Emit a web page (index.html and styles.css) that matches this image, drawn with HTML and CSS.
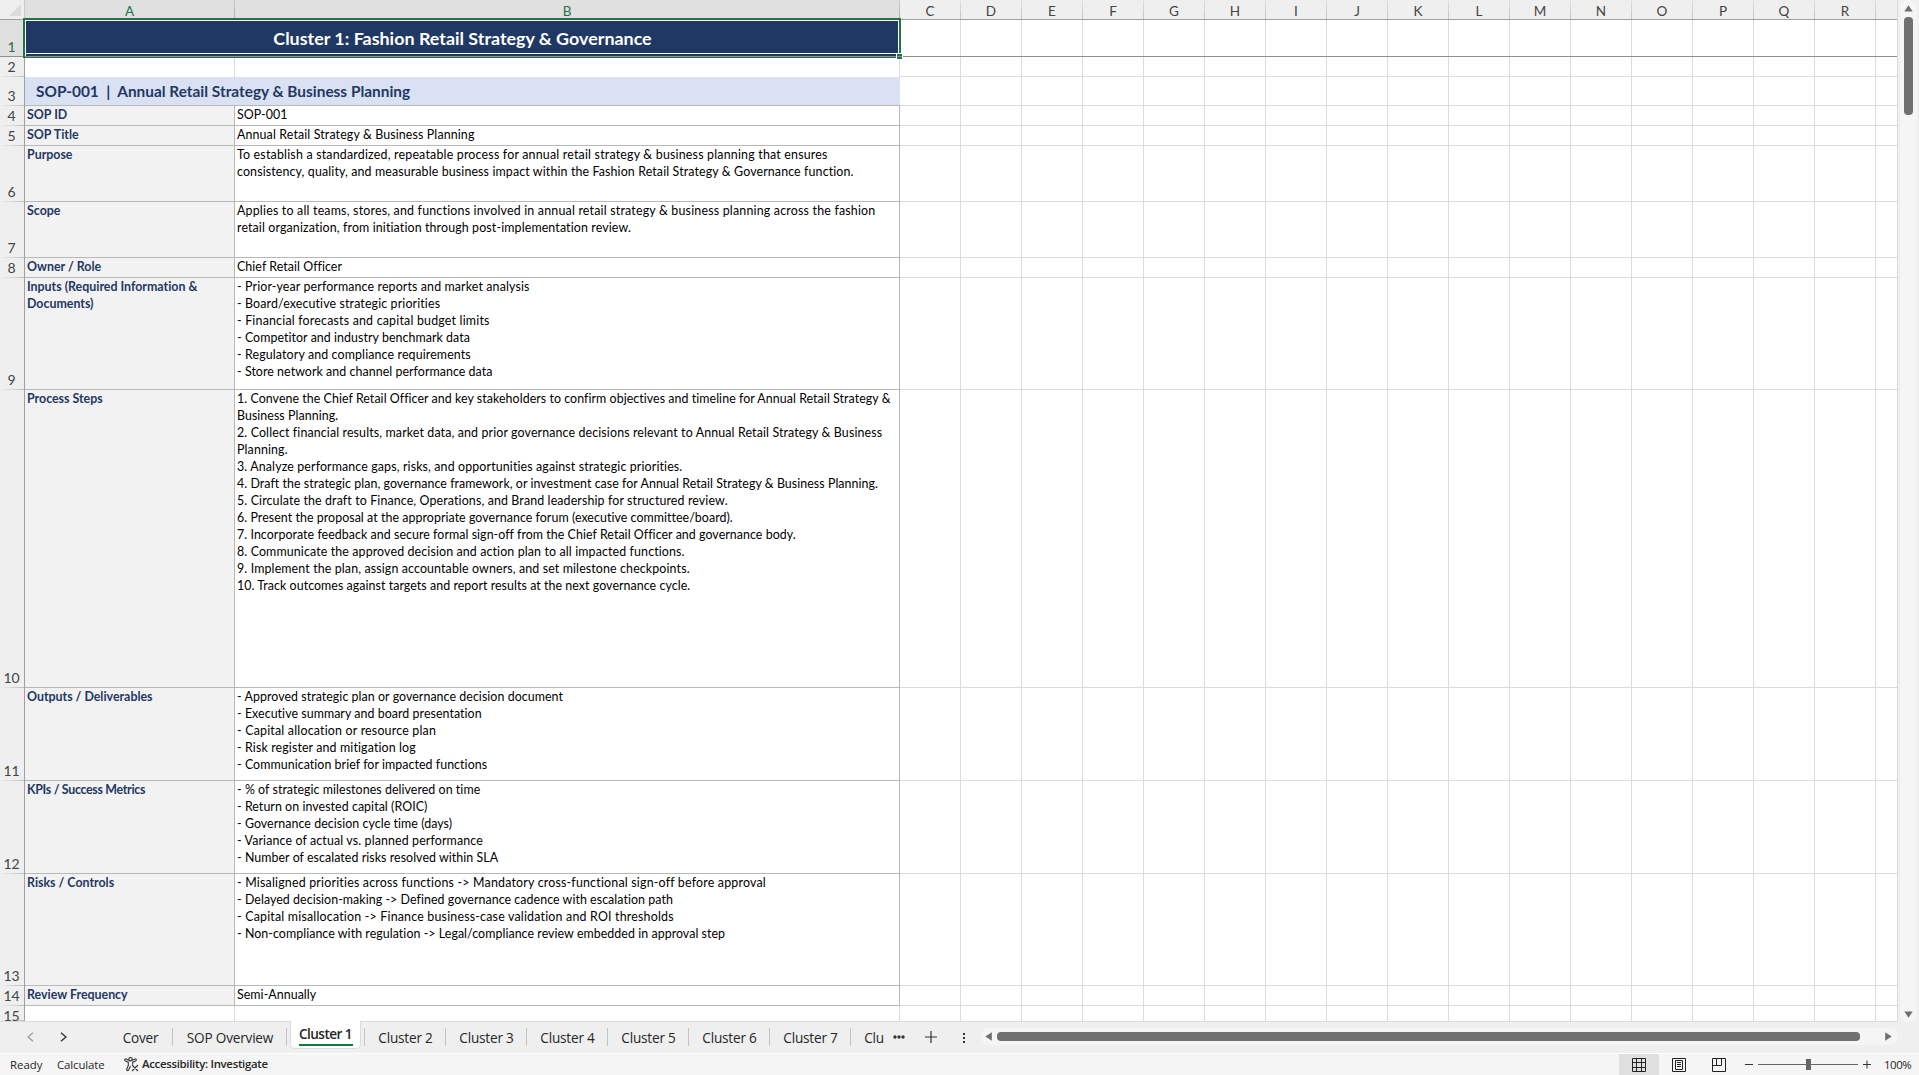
FILE: index.html
```html
<!DOCTYPE html>
<html lang="en">
<head>
    <meta charset="utf-8">
    <title>Fashion Retail SOPs</title>
    <link rel="stylesheet" href="styles.css">
</head>
<body>
<div id="app">
    <div id="main">
        <div id="sheet">
            <div class="col-heads">
                <div class="corner"><svg width="24" height="19"><path d="M21 4v12H9z" fill="#dcdcdc"/></svg></div>
                <div class="ch a sel">A</div>
                <div class="ch b sel">B</div>
                <div class="ch">C</div><div class="ch">D</div><div class="ch">E</div><div class="ch">F</div>
                <div class="ch">G</div><div class="ch">H</div><div class="ch">I</div><div class="ch">J</div>
                <div class="ch">K</div><div class="ch">L</div><div class="ch">M</div><div class="ch">N</div>
                <div class="ch">O</div><div class="ch">P</div><div class="ch">Q</div><div class="ch">R</div>
            </div>
            <div class="row r1">
                <div class="rh sel">1</div>
                <div class="title">Cluster 1: Fashion Retail Strategy &amp; Governance</div>
                <div class="rest"></div>
                <div class="selection"><i class="handle"></i></div>
            </div>
            <div class="row empty">
                <div class="rh">2</div><div class="label"></div><div class="val"></div><div class="rest"></div>
            </div>
            <div class="row r3">
                <div class="rh">3</div>
                <div class="section">SOP-001  |  Annual Retail Strategy &amp; Business Planning</div>
                <div class="rest"></div>
            </div>
            <div class="row">
                <div class="rh">4</div><div class="label">SOP ID</div><div class="val">SOP-001</div><div class="rest"></div>
            </div>
            <div class="row">
                <div class="rh">5</div><div class="label">SOP Title</div>
                <div class="val"><span class="w2">Annual Retail Strategy &amp; Business Planning</span></div><div class="rest"></div>
            </div>
            <div class="row h56">
                <div class="rh">6</div><div class="label">Purpose</div>
                <div class="val"><span class="w3">To establish a standardized, repeatable process for annual retail strategy &amp; business planning that ensures</span>
<span class="w2">consistency, quality, and measurable business impact within the Fashion Retail Strategy &amp; Governance function.</span></div>
                <div class="rest"></div>
            </div>
            <div class="row h56">
                <div class="rh">7</div><div class="label">Scope</div>
                <div class="val"><span class="w3">Applies to all teams, stores, and functions involved in annual retail strategy &amp; business planning across the fashion</span>
<span class="w2">retail organization, from initiation through post-implementation review.</span></div>
                <div class="rest"></div>
            </div>
            <div class="row">
                <div class="rh">8</div><div class="label">Owner / Role</div><div class="val">Chief Retail Officer</div><div class="rest"></div>
            </div>
            <div class="row h112">
                <div class="rh">9</div><div class="label">Inputs (Required Information &amp;
Documents)</div>
                <div class="val"><span class="w2">- Prior-year performance reports and market analysis
- Board/executive strategic priorities</span>
<span class="w3">- Financial forecasts and capital budget limits</span>
- Competitor and industry benchmark data
<span class="w2">- Regulatory and compliance requirements</span>
- Store network and channel performance data</div>
                <div class="rest"></div>
            </div>
            <div class="row h298">
                <div class="rh">10</div><div class="label">Process Steps</div>
                <div class="val">1. Convene the Chief Retail Officer and key stakeholders to confirm objectives and timeline for Annual Retail Strategy &amp;
Business Planning.
<span class="w2">2. Collect financial results, market data, and prior governance decisions relevant to Annual Retail Strategy &amp; Business
Planning.
3. Analyze performance gaps, risks, and opportunities against strategic priorities.</span>
4. Draft the strategic plan, governance framework, or investment case for Annual Retail Strategy &amp; Business Planning.
<span class="w2">5. Circulate the draft to Finance, Operations, and Brand leadership for structured review.</span>
6. Present the proposal at the appropriate governance forum (executive committee/board).
7. Incorporate feedback and secure formal sign-off from the Chief Retail Officer and governance body.
<span class="w2">8. Communicate the approved decision and action plan to all impacted functions.
9. Implement the plan, assign accountable owners, and set milestone checkpoints.</span>
10. Track outcomes against targets and report results at the next governance cycle.</div>
                <div class="rest"></div>
            </div>
            <div class="row h93">
                <div class="rh">11</div><div class="label">Outputs / Deliverables</div>
                <div class="val">- Approved strategic plan or governance decision document
- Executive summary and board presentation
<span class="w3">- Capital allocation or resource plan</span>
<span class="w2">- Risk register and mitigation log</span>
- Communication brief for impacted functions</div>
                <div class="rest"></div>
            </div>
            <div class="row h93">
                <div class="rh">12</div><div class="label tight">KPIs / Success Metrics</div>
                <div class="val">- % of strategic milestones delivered on time
- Return on invested capital (ROIC)
- Governance decision cycle time (days)
<span class="w2">- Variance of actual vs. planned performance</span>
- Number of escalated risks resolved within SLA</div>
                <div class="rest"></div>
            </div>
            <div class="row h112">
                <div class="rh">13</div><div class="label">Risks / Controls</div>
                <div class="val"><span class="w3">- Misaligned priorities across functions -&gt; Mandatory cross-functional sign-off before approval</span>
- Delayed decision-making -&gt; Defined governance cadence with escalation path
<span class="w3">- Capital misallocation -&gt; Finance business-case validation and ROI thresholds</span>
- Non-compliance with regulation -&gt; Legal/compliance review embedded in approval step</div>
                <div class="rest"></div>
            </div>
            <div class="row">
                <div class="rh">14</div><div class="label">Review Frequency</div><div class="val">Semi-Annually</div><div class="rest"></div>
            </div>
            <div class="row empty last">
                <div class="rh">15</div><div class="label"></div><div class="val"></div><div class="rest"></div>
            </div>
        </div>
        <div id="vscroll">
            <svg width="9" height="7"><path d="M4.5 0.3L8.7 6.6H0.3z" fill="#707070"/></svg>
            <div class="vthumb"></div>
            <svg class="down" width="9" height="7"><path d="M4.5 6.7L8.7 0.4H0.3z" fill="#707070"/></svg>
        </div>
    </div>

    <div id="tabs">
        <div class="arrows">
            <svg width="7" height="10" fill="none" stroke="#9a9a9a" stroke-width="1.2"><path d="M6 0.7L1 5l5 4.3"/></svg>
            <svg width="7" height="10" fill="none" stroke="#333" stroke-width="1.4"><path d="M1 0.7L6 5l-5 4.3"/></svg>
        </div>
        <a class="tab cover">Cover</a>
        <a class="tab overview">SOP Overview</a>
        <a class="tab active"><span>Cluster 1</span></a>
        <a class="tab first">Cluster 2</a>
        <a class="tab">Cluster 3</a>
        <a class="tab">Cluster 4</a>
        <a class="tab">Cluster 5</a>
        <a class="tab">Cluster 6</a>
        <a class="tab">Cluster 7</a>
        <a class="tab cut">Clu</a>
        <svg class="more" width="12" height="4" fill="#333"><circle cx="2" cy="2" r="1.7"/><circle cx="6" cy="2" r="1.7"/><circle cx="10" cy="2" r="1.7"/></svg>
        <svg class="add" width="12" height="12"><path d="M6 0v12M0 6h12" stroke="#333" stroke-width="1.2"/></svg>
        <svg class="dots" width="3" height="11" fill="#333"><path d="M0 0h2v2H0zM0 4h2v2H0zM0 8h2v2H0z"/></svg>
        <div id="hscroll">
            <svg width="7" height="9"><path d="M0.3 4.5L6.8 0.3v8.4z" fill="#707070"/></svg>
            <div class="hthumb"></div>
            <svg class="right" width="7" height="9"><path d="M6.7 4.5L0.2 0.3v8.4z" fill="#707070"/></svg>
        </div>
    </div>

    <div id="status">
        <span class="ready">Ready</span>
        <span class="calc">Calculate</span>
        <svg class="acc-icon" width="15" height="15" fill="none" stroke="#333" stroke-width="1.1">
            <circle cx="6.5" cy="2.2" r="1.7"/>
            <path d="M4.8 3.2L2 2C0.7 1.6 0.2 3.3 1.4 3.9L4.3 5.2v3.2L2.7 12.2c-0.4 1.3 1.2 2 1.9 0.8L6.5 9.3M8.2 3.2L11 2c1.3-0.4 1.8 1.3 0.6 1.9L8.7 5.2V7.5M8 8l6 6M14 8l-6 6"/>
        </svg>
        <b class="acc">Accessibility: Investigate</b>
        <div class="views">
            <div class="view on"><svg width="14" height="14" fill="none" stroke="#222"><path d="M0.5 0.5h13v13H0.5zM4.5 0v14M9.5 0v14M0 4.5h14M0 9.5h14"/></svg></div>
            <div class="view"><svg width="14" height="14" fill="none" stroke="#222"><path d="M0.5 0.5h13v13H0.5zM3.5 2.5h7v9h-7zM5 4.5h4M5 6.5h4M5 8.5h4"/></svg></div>
            <div class="view"><svg width="14" height="14" fill="none" stroke="#222"><path d="M0.5 0.5h13v13H0.5zM0 7.5h9.5V0M4.5 0v7.5"/></svg></div>
        </div>
        <div class="zoom">
            <i class="minus"></i>
            <div class="slider"><i></i></div>
            <svg width="8" height="9"><path d="M4 0.5v8M0 4.5h8" stroke="#333"/></svg>
            <span>100%</span>
        </div>
    </div>
</div>
</body>
</html>
```

FILE: styles.css
```css
* {
    box-sizing: border-box;
}

body {
    margin: 0;
    overflow: hidden;
    background: #efefef;
}

svg {
    display: block;
    flex: none;
}

#app {
    display: flex;
    flex-direction: column;
    width: 1919px;
    height: 1075px;
    font-family: "Open Sans", sans-serif;
    color: #262626;
}

#main {
    display: flex;
    height: 1022px;
}

/* grid */

#sheet {
    width: 1898px;
    background: #fff;
    border-right: 1px solid #dcdcdc;
    font-family: Lato, sans-serif;
}

.col-heads {
    display: flex;
    height: 20px;
    background: #efefef;
    border-bottom: 1px solid #a0a0a0;
}

.corner {
    width: 25px;
    border-right: 1px solid #c8c8c8;
}

.ch {
    width: 61px;
    border-right: 1px solid;
    border-image: linear-gradient(#e6e6e6, #bdbdbd) 1;
    text-align: center;
    font-size: 13.5px;
    line-height: 22px;
    color: #444;
}

.ch.a {
    width: 210px;
}

.ch.b {
    width: 665px;
}

.ch.sel {
    background: #e0e0e0;
    border-image: linear-gradient(#d0d0d0, #a8a8a8) 1;
    color: #217346;
}

.row {
    position: relative;
    display: flex;
    height: 20px;
}

.r1 { height: 37px; }
.r3 { height: 29px; }
.h56 { height: 56px; }
.h93 { height: 93px; }
.h112 { height: 112px; }
.h298 { height: 298px; }
.last { height: 16px; }

.rh {
    display: flex;
    align-items: flex-end;
    justify-content: center;
    width: 25px;
    padding: 0 1px 1px 0;
    background: linear-gradient(90deg, #efefef, #bdbdbd) bottom / 100% 1px no-repeat #efefef;
    border-right: 1px solid #a0a0a0;
    font-size: 14px;
    line-height: 18px;
    color: #444;
}

.rh.sel {
    padding-bottom: 0;
    background: #e0e0e0;
    color: #217346;
}

.last .rh {
    align-items: flex-start;
    padding-top: 0;
    line-height: 19px;
}

.last {
    border-bottom: 1px solid #dcdcdc;
}

.label,
.val {
    padding: 0 2px;
    border-right: 1px solid #b8b8b8;
    border-bottom: 1px solid #b8b8b8;
    font-size: 12.4px;
    line-height: 17px;
    white-space: pre;
}

.label {
    width: 210px;
    background: #f2f2f2;
    color: #1f3864;
    font-weight: bold;
    font-variant-ligatures: none;
}

.label.tight {
    letter-spacing: -0.3px;
}

.val {
    width: 665px;
    color: #000;
    letter-spacing: 0.06px;
}

/* letter fit for wider lines */
.w2 {
    letter-spacing: 0.13px;
}

.w3 {
    letter-spacing: 0.2px;
}

.empty .label,
.empty .val {
    background: #fff;
    border-color: #dcdcdc;
    border-bottom: 0;
}

.rest {
    flex: 1;
    border-bottom: 1px solid #dcdcdc;
    background: repeating-linear-gradient(90deg, transparent 0, transparent 60px, #dcdcdc 60px, #dcdcdc 61px);
}

.last .rest {
    border-bottom: 0;
}

.title {
    width: 875px;
    background: #203864;
    color: #fff;
    font-size: 17.9px;
    font-weight: bold;
    line-height: 36px;
    text-align: center;
}

.r1 .rest,
.r1 .rh {
    border-bottom: 1px solid #909090;
}

.selection {
    position: absolute;
    left: 23px;
    top: -2px;
    width: 878px;
    height: 40px;
    border: 2px solid #217346;
    border-bottom-width: 1px;
    box-shadow: inset 0 0 0 1px #fff;
    z-index: 1;
}

.selection::after {
    content: "";
    position: absolute;
    left: 0;
    right: 0;
    bottom: 0;
    height: 2px;
    border-top: 1px solid #fff;
    border-bottom: 1px solid #909090;
}

.handle {
    position: absolute;
    right: -4px;
    bottom: -3px;
    z-index: 1;
    width: 7px;
    height: 7px;
    border: 1px solid #fff;
    background: linear-gradient(#217346 2px, #909090 2px, #909090 3px, #217346 3px);
}

.section {
    width: 875px;
    padding-left: 11px;
    background: #d9e1f2;
    border-bottom: 1px solid #b8b8b8;
    color: #1f3864;
    font-size: 15.4px;
    font-weight: bold;
    line-height: 28px;
    white-space: pre;
}

/* scrollbars */

#vscroll {
    display: flex;
    flex-direction: column;
    align-items: center;
    width: 17px;
    height: 1022px;
    margin-left: 2px;
    padding: 5px 0 4px;
    border-radius: 8px;
    background: #f5f5f5;
}

.vthumb {
    width: 9px;
    height: 98px;
    margin-top: 5px;
    border-radius: 4px;
    background: #707070;
}

.down {
    margin-top: auto;
}

#hscroll {
    display: flex;
    align-items: center;
    width: 917px;
    height: 17px;
    margin: 6px 0 0 15px;
    padding: 0 6px 0 4px;
    border-radius: 8px;
    background: #f5f5f5;
}

.hthumb {
    width: 863px;
    height: 9px;
    margin-left: 5px;
    border-radius: 4px;
    background: #707070;
}

.right {
    margin-left: auto;
}

/* sheet tabs */

#tabs {
    display: flex;
    height: 32px;
    border-bottom: 1px solid #fff;
    font-size: 13.6px;
    letter-spacing: -0.2px;
    line-height: 31px;
}

.arrows {
    display: flex;
    gap: 26px;
    width: 102px;
    padding: 10px 0 0 27px;
}

.tab {
    position: relative;
    width: 81px;
    text-align: center;
    white-space: nowrap;
}

.tab::after {
    content: "";
    position: absolute;
    right: 0;
    top: 6px;
    width: 1px;
    height: 18px;
    background: #c4c4c4;
}

.cover {
    width: 71px;
    padding-left: 6px;
}

.overview {
    width: 114px;
}

.tab.active {
    width: 71px;
    height: 28px;
    margin: -1px 0 0 3px;
    background: #fff;
    border: 1px solid #dcdcdc;
    border-top: 0;
    border-radius: 0 0 5px 5px;
    font-weight: 600;
    letter-spacing: -0.55px;
    line-height: 26px;
}

.active span {
    display: block;
    width: 54px;
    height: 25px;
    margin: 0 auto;
    border-bottom: 2px solid #107c41;
}

.active::after {
    right: -5px;
    top: 7px;
}

.first {
    margin-left: 4px;
}

.cut {
    width: 42px;
    padding-left: 4px;
}

.cut::after {
    display: none;
}

.more {
    margin-top: 13px;
}

.add {
    margin: 9px 0 0 20px;
}

.dots {
    margin: 11px 0 0 26px;
}

/* status bar */

#status {
    display: flex;
    align-items: center;
    height: 21px;
    background: #f5f5f5;
    font-size: 11.4px;
    line-height: 20px;
}

.ready {
    width: 47px;
    margin-left: 10px;
}

.calc {
    width: 67px;
    letter-spacing: -0.1px;
}

.acc {
    margin: -1px 0 0 3px;
    font-weight: 600;
    letter-spacing: -0.3px;
}

.views {
    display: flex;
    margin-left: auto;
}

.view {
    display: flex;
    align-items: center;
    justify-content: center;
    width: 40px;
    height: 21px;
}

.view.on {
    background: #e0e0e0;
}

.zoom {
    display: flex;
    align-items: center;
    width: 180px;
    padding-left: 6px;
}

.minus {
    width: 8px;
    height: 1px;
    background: #333;
}

.slider {
    display: flex;
    align-items: center;
    justify-content: center;
    width: 100px;
    height: 11px;
    margin: 0 5px;
    background: linear-gradient(#666, #666) center / 100% 1px no-repeat;
}

.slider i {
    width: 5px;
    height: 11px;
    background: #666;
}

.zoom span {
    margin-left: 13px;
    letter-spacing: -0.4px;
}
```
